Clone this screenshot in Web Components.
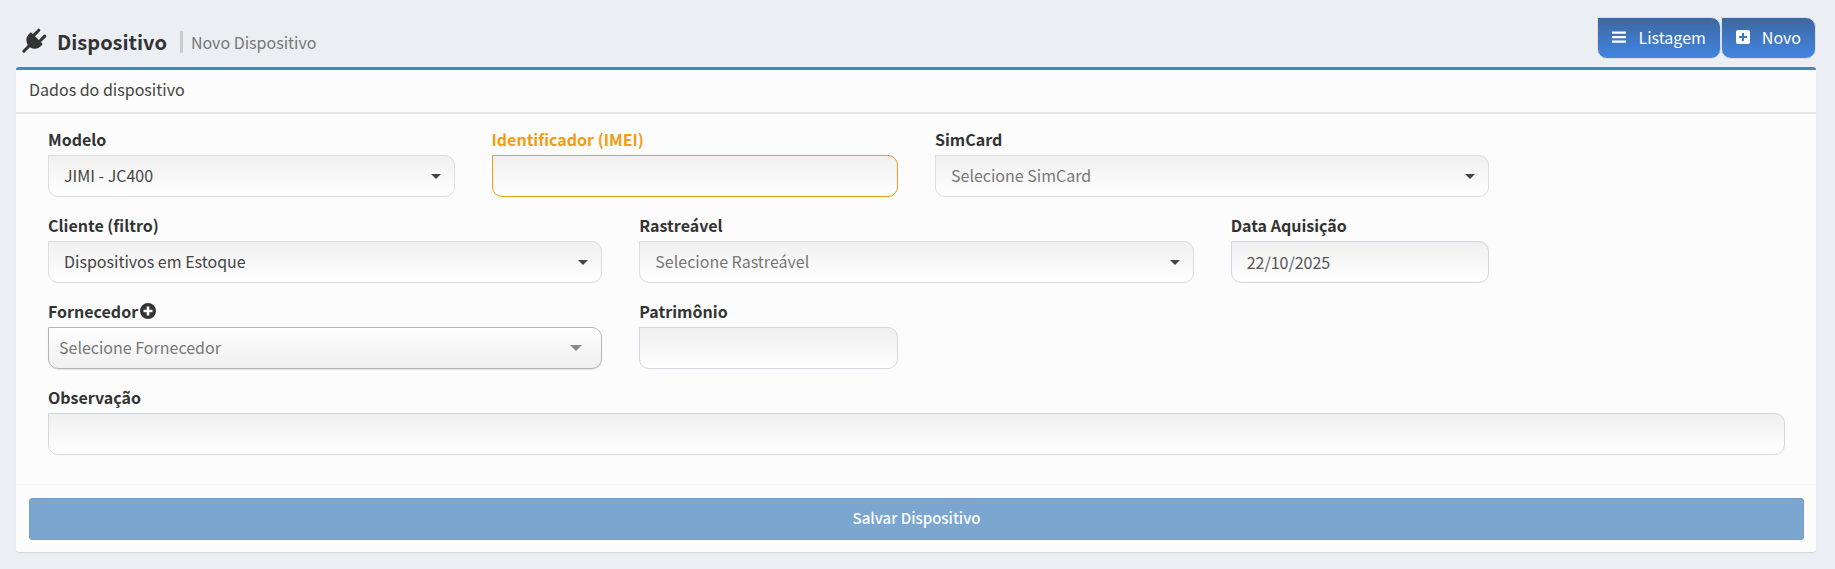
<!DOCTYPE html>
<html lang="pt-BR">
<head>
<meta charset="utf-8">
<title>Dispositivo</title>
<style>
  body {
    margin: 0;
    background: #ebeff4;
    color: #333;
    font: 16px/22px "Noto Sans CJK SC", "Open Sans", sans-serif;
  }
</style>
</head>
<body>
<device-page>
  <page-header slot="header" heading="Dispositivo" subtitle="Novo Dispositivo">
    <action-button icon="list">Listagem</action-button>
    <action-button icon="plus">Novo</action-button>
  </page-header>

  <form-panel heading="Dados do dispositivo">
    <form-field label="Modelo" type="select" span="3">
      <option>JIMI - JC400</option>
    </form-field>
    <form-field label="Identificador (IMEI)" span="3" warning></form-field>
    <form-field label="SimCard" type="select" span="4" empty>
      <option>Selecione SimCard</option>
    </form-field>

    <form-field label="Cliente (filtro)" type="select" span="4" first>
      <option>Dispositivos em Estoque</option>
    </form-field>
    <form-field label="Rastreável" type="select" span="4" empty>
      <option>Selecione Rastreável</option>
    </form-field>
    <form-field label="Data Aquisição" span="2" value="22/10/2025"></form-field>

    <form-field label="Fornecedor" type="select" span="4" first empty raised addable>
      <option>Selecione Fornecedor</option>
    </form-field>
    <form-field label="Patrimônio" span="2"></form-field>

    <form-field label="Observação" span="12" first></form-field>

    <save-button slot="footer">Salvar Dispositivo</save-button>
  </form-panel>
</device-page>

<script>
const icons = {
  plug: '<svg viewBox="0 0 24 24" width="24" height="24" fill="currentColor" overflow="visible"><g transform="rotate(45 12 12)"><rect x="6.300" y="-2" width="3" height="11" rx="1.500"/><rect x="14.700" y="-2" width="3" height="11" rx="1.500"/><path d="M4.500 6.500h15a1 1 0 0 1 1 1v2a8.500 8.500 0 0 1-7 8.300V25a1.500 1.500 0 0 1-3 0v-7.200a8.500 8.500 0 0 1-7-8.300v-2a1 1 0 0 1 1-1z"/></g></svg>',
  list: '<svg viewBox="0 0 14 12" width="14" height="12" fill="currentColor"><path d="M0 .5h14v2.300H0zM0 5h14v2.300H0zM0 9.500h14v2.300H0z"/></svg>',
  plus: '<svg viewBox="0 0 14 14" width="14" height="14" fill="currentColor" fill-rule="evenodd"><path d="M2 0h10a2 2 0 0 1 2 2v10a2 2 0 0 1-2 2H2a2 2 0 0 1-2-2V2a2 2 0 0 1 2-2zM6 3v3H3v2h3v3h2V8h3V6H8V3z"/></svg>',
  circle: '<svg viewBox="0 0 16 16" width="16" height="16" fill="currentColor" fill-rule="evenodd"><path d="M8 0a8 8 0 1 0 0 16A8 8 0 0 0 8 0zM6.700 3.500v3.200H3.500v2.600h3.200v3.200h2.600V9.300h3.200V6.700H9.300V3.500z"/></svg>'
};

// page shell
class DevicePage extends HTMLElement {
  constructor() {
    super();
    this.attachShadow({ mode: 'open' }).innerHTML = `
      <style>
        :host { display: block; padding: 0 19px 17px 16px; }
      </style>
      <slot name="header"></slot>
      <main><slot></slot></main>
    `;
  }
}

class PageHeader extends HTMLElement {
  constructor() {
    super();
    this.attachShadow({ mode: 'open' }).innerHTML = `
      <style>
        :host {
          display: flex; align-items: flex-start; justify-content: space-between;
          padding: 17px 0 8px;
        }
        .title { display: flex; align-items: center; padding: 12px 0 0 5px; }
        .title svg { display: block; }
        h1 { margin: 0 13px 0 12px; font-size: 20px; line-height: 26px; font-weight: 700; }
        small {
          border-left: 3px solid #ccc; padding-left: 8px;
          font-size: 16px; line-height: 22px; color: #777;
        }
        nav { display: flex; }
      </style>
      <div class="title">${icons.plug}<h1></h1><small></small></div>
      <nav><slot></slot></nav>
    `;
  }

  connectedCallback() {
    this.shadowRoot.querySelector('h1').textContent = this.getAttribute('heading');
    this.shadowRoot.querySelector('small').textContent = this.getAttribute('subtitle');
  }
}

class ActionButton extends HTMLElement {
  constructor() {
    super();
    this.attachShadow({ mode: 'open' }).innerHTML = `
      <style>
        :host { display: block; }
        button {
          display: flex; align-items: center; gap: 12px;
          height: 42px; padding: 0 14px 2px;
          border: 1px solid #ddd; border-radius: 0 10px 10px 10px;
          background: linear-gradient(#3c689f, #4385e2);
          color: #fff; font: inherit; cursor: pointer;
        }
      </style>
      <button type="button"><span id="icon" style="display:contents"></span><slot></slot></button>
    `;
  }

  connectedCallback() {
    this.shadowRoot.getElementById('icon').innerHTML = icons[this.getAttribute('icon')];
  }
}

class FormPanel extends HTMLElement {
  constructor() {
    super();
    this.attachShadow({ mode: 'open' }).innerHTML = `
      <style>
        :host {
          display: block; background: #fcfcfc;
          border-top: 3px solid #3c8dbc; border-radius: 3px;
          box-shadow: 0 1px 1px rgba(0,0,0,.1);
        }
        h2 {
          margin: 0; padding: 8px 13px 12px; border-bottom: 2px solid #e5e5e5;
          font-size: 16px; line-height: 22px; font-weight: 400; color: #444;
        }
        .fields {
          display: grid; grid-template-columns: repeat(12, minmax(0, 1fr));
          gap: 19px 37px; padding: 16px 31px 29px 32px;
        }
        footer { border-top: 1px solid #f4f4f4; padding: 13px 12px 12px 13px; }
      </style>
      <h2></h2>
      <div class="fields"><slot></slot></div>
      <footer><slot name="footer"></slot></footer>
    `;
  }

  connectedCallback() {
    this.shadowRoot.querySelector('h2').textContent = this.getAttribute('heading');
  }
}

class FormField extends HTMLElement {
  constructor() {
    super();
    this.attachShadow({ mode: 'open' });
  }

  connectedCallback() {
    const isSelect = this.getAttribute('type') === 'select';
    this.style.gridColumn = `${this.hasAttribute('first') ? '1 / ' : ''}span ${this.getAttribute('span')}`;

    this.shadowRoot.innerHTML = `
      <style>
        :host { display: block; }
        .label { display: flex; align-items: center; gap: 2px; height: 18px; padding-bottom: 7px; }
        label { font-weight: 700; line-height: 18px; }
        .add { display: flex; padding: 0; border: 0; background: none; color: inherit; cursor: pointer; }
        .box { display: grid; align-items: center; }
        .box > * { grid-area: 1 / 1; }
        .control {
          box-sizing: border-box; width: 100%; height: 42px; margin: 0; padding: 0 15px;
          border: 1px solid #d2d6de; border-radius: 0 10px 10px 10px;
          background: linear-gradient(#f0f0f0, #fff);
          color: #555; font: inherit; appearance: none; outline: 0;
        }
        select.control { border-color: #ddd; color: #444; padding-bottom: 3px; }
        .arrow { justify-self: end; margin-right: 14px; fill: #444; pointer-events: none; }
        :host([empty]) .control { color: #777; }
        :host([warning]) label { color: #f39c12; }
        :host([warning]) .control { border-color: #f39c12; }
        :host([raised]) .control {
          padding: 0 10px 2px; border-color: #b5b5b5;
          background: linear-gradient(#fff, #f0f0f0);
          box-shadow: 0 1px 1px rgba(0,0,0,.1);
        }
        :host([raised]) .arrow { margin-right: 20px; width: 12px; height: 6px; fill: #888; }
      </style>
      <div class="label">
        <label for="control">${this.getAttribute('label')}</label>
        ${this.hasAttribute('addable') ? `<button class="add" type="button" aria-label="Adicionar">${icons.circle}</button>` : ''}
      </div>
      <div class="box">
        ${isSelect
          ? '<select class="control" id="control"></select><svg class="arrow" viewBox="0 0 10 5" width="10" height="5" preserveAspectRatio="none"><path d="M0 0h10L5 5z"/></svg>'
          : '<input class="control" id="control" type="text">'}
      </div>
    `;

    const control = this.shadowRoot.getElementById('control');
    if (isSelect) {
      // options come from the light DOM
      this.querySelectorAll('option').forEach(o => control.add(new Option(o.textContent)));
    } else {
      control.value = this.getAttribute('value') ?? '';
    }
  }
}

class SaveButton extends HTMLElement {
  constructor() {
    super();
    this.attachShadow({ mode: 'open' }).innerHTML = `
      <style>
        :host { display: block; }
        button {
          display: block; width: 100%; height: 42px; padding: 0 12px 3px;
          border: 1px solid #729fc8; border-radius: 3px;
          background: #7aa6d0; color: #fff; font: inherit;
          font-size: 15px; font-weight: 500;
        }
      </style>
      <button type="submit"><slot></slot></button>
    `;
  }
}

customElements.define('device-page', DevicePage);
customElements.define('page-header', PageHeader);
customElements.define('action-button', ActionButton);
customElements.define('form-panel', FormPanel);
customElements.define('form-field', FormField);
customElements.define('save-button', SaveButton);
</script>
</body>
</html>
